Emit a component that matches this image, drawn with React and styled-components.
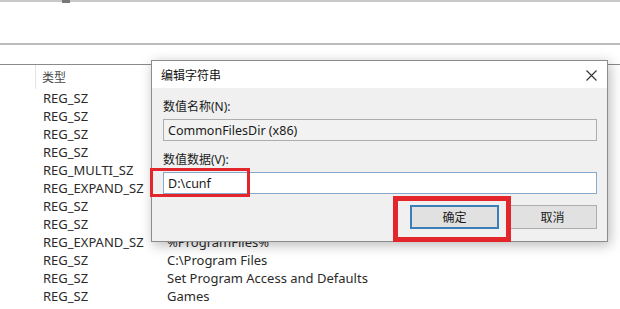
import React from "react";
import styled, { createGlobalStyle } from "styled-components";

const GlobalStyle = createGlobalStyle`
  html, body {
    margin: 0;
    padding: 0;
    background: #ffffff;
  }
  body {
    font-family: "Noto Sans", "Noto Sans CJK SC", sans-serif;
    font-size: 12px;
    color: #1e1e1e;
  }
`;

const Screen = styled.div`
  position: relative;
  width: 620px;
  height: 309px;
  overflow: hidden;
  background: #fff;
`;

const TopStrip = styled.div`
  height: 45px;
  border-top: 2px solid #c9c9c9;
  border-bottom: 2px solid #bdbdbd;
  box-sizing: border-box;
  position: relative;
  & .grip {
    position: absolute;
    left: 62px;
    top: -2px;
    width: 8px;
    height: 3px;
    background: #777;
  }
`;

const List = styled.div`
  margin-top: 19px;
  border-top: 1px solid #8a8a8a;
`;

const HeaderRow = styled.div`
  display: grid;
  grid-template-columns: 36px 131px 1fr;
  height: 24px;
  align-items: center;
  & span {
    color: #4a4a4a;
    padding-left: 6px;
    height: 100%;
    display: flex;
    align-items: center;
  }
  & span:first-child {
    border-right: 1px solid #e3e3e3;
    padding: 0;
  }
`;

const Row = styled.div`
  display: grid;
  grid-template-columns: 36px 131px 1fr;
  height: 18px;
  line-height: 18px;
  font-size: 13px;
  color: #2a2a2a;
  & span:nth-child(2) {
    padding-left: 7px;
  }
`;

const Dialog = styled.div`
  position: absolute;
  left: 151px;
  top: 60px;
  width: 457px;
  height: 182px;
  box-sizing: border-box;
  border: 1px solid #8c8c8c;
  background: #f0f0f0;
  box-shadow: 2px 3px 12px rgba(0, 0, 0, 0.28);
  display: flex;
  flex-direction: column;
  z-index: 2;
`;

const TitleBar = styled.div`
  height: 26px;
  background: #fff;
  display: flex;
  align-items: center;
  justify-content: space-between;
  padding: 1px 10px 0 9px;
  color: #111;
`;

const CloseIcon = styled.svg`
  width: 11px;
  height: 11px;
`;

const Body = styled.div`
  flex: 1;
  padding: 11px 10px 12px 11px;
  display: flex;
  flex-direction: column;
`;

const Label = styled.div`
  line-height: 16px;
  color: #1a1a1a;
  margin-top: ${(p) => p.$gap || 0}px;
  margin-bottom: 4px;
`;

const Field = styled.div`
  height: 22px;
  box-sizing: border-box;
  border: 1px solid ${(p) => (p.$focused ? "#86a9cc" : "#adadad")};
  background: ${(p) => (p.$focused ? "#ffffff" : "#f2f2f2")};
  display: flex;
  align-items: center;
  padding-left: 4px;
  font-size: 12.5px;
  color: #1a1a1a;
`;

const Buttons = styled.div`
  display: flex;
  justify-content: flex-end;
  gap: 9px;
  margin-top: 11px;
`;

const Button = styled.div`
  width: 89px;
  height: 24px;
  box-sizing: border-box;
  background: #e1e1e1;
  border: ${(p) => (p.$primary ? "2px solid #3c7fb8" : "1px solid #adadad")};
  display: flex;
  align-items: center;
  justify-content: center;
  color: #1a1a1a;
`;

const Highlight = styled.div`
  position: absolute;
  box-sizing: border-box;
  border: ${(p) => p.$w}px solid #e2262b;
  z-index: 3;
`;

const types = [
  ["REG_SZ", ""],
  ["REG_SZ", ""],
  ["REG_SZ", ""],
  ["REG_SZ", ""],
  ["REG_MULTI_SZ", ""],
  ["REG_EXPAND_SZ", ""],
  ["REG_SZ", ""],
  ["REG_SZ", ""],
  ["REG_EXPAND_SZ", "%ProgramFiles%"],
  ["REG_SZ", "C:\\Program Files"],
  ["REG_SZ", "Set Program Access and Defaults"],
  ["REG_SZ", "Games"],
];

export default function App() {
  return (
    <>
      <GlobalStyle />
      <Screen>
        <TopStrip>
          <div className="grip" />
        </TopStrip>
        <List>
          <HeaderRow>
            <span />
            <span>类型</span>
            <span />
          </HeaderRow>
          {types.map(([t, d], i) => (
            <Row key={i}>
              <span />
              <span>{t}</span>
              <span>{d}</span>
            </Row>
          ))}
        </List>

        <Dialog>
          <TitleBar>
            <span>编辑字符串</span>
            <CloseIcon viewBox="0 0 11 11">
              <path d="M0.5 0.5 L10.5 10.5 M10.5 0.5 L0.5 10.5" stroke="#333" strokeWidth="1.1" />
            </CloseIcon>
          </TitleBar>
          <Body>
            <Label>数值名称(N):</Label>
            <Field>CommonFilesDir (x86)</Field>
            <Label $gap={11}>数值数据(V):</Label>
            <Field $focused>D:\cunf</Field>
            <Buttons>
              <Button $primary>确定</Button>
              <Button>取消</Button>
            </Buttons>
          </Body>
        </Dialog>

        <Highlight $w={3} style={{ left: 150, top: 168, width: 100, height: 29 }} />
        <Highlight $w={5} style={{ left: 393, top: 196, width: 118, height: 46 }} />
      </Screen>
    </>
  );
}
